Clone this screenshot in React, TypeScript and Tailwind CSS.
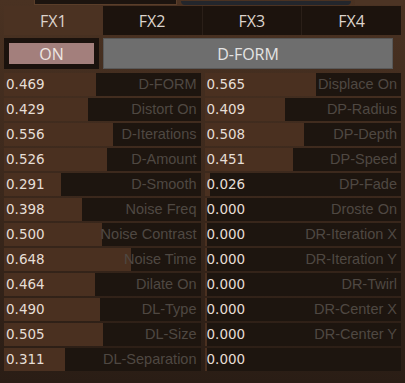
import React from "react";

const left: [number, string][] = [
  [0.469, "D-FORM"],
  [0.429, "Distort On"],
  [0.556, "D-Iterations"],
  [0.526, "D-Amount"],
  [0.291, "D-Smooth"],
  [0.398, "Noise Freq"],
  [0.5, "Noise Contrast"],
  [0.648, "Noise Time"],
  [0.464, "Dilate On"],
  [0.49, "DL-Type"],
  [0.505, "DL-Size"],
  [0.311, "DL-Separation"],
];
const right: [number, string][] = [
  [0.565, "Displace On"],
  [0.409, "DP-Radius"],
  [0.508, "DP-Depth"],
  [0.451, "DP-Speed"],
  [0.026, "DP-Fade"],
  [0, "Droste On"],
  [0, "DR-Iteration X"],
  [0, "DR-Iteration Y"],
  [0, "DR-Twirl"],
  [0, "DR-Center X"],
  [0, "DR-Center Y"],
  [0, ""],
];

function Row({ v, label }: { v: number; label: string }) {
  return (
    <div className="relative h-[23px] bg-[#1d150f] overflow-hidden">
      <div
        className="absolute left-0 top-0 h-full bg-[#4a3020]"
        style={{ width: `max(2px, ${v * 100}%)` }}
      />
      <div className="relative flex h-full items-center justify-between pl-[2px] pr-[4px]">
        <span className="text-[13.5px] text-[#e6ded6] [font-family:'DejaVu_Sans',Verdana,sans-serif] leading-none">
          {v.toFixed(3)}
        </span>
        <span className="text-[14.5px] text-[#4f4842] [font-family:'Liberation_Sans',Arial,sans-serif] leading-none">
          {label}
        </span>
      </div>
    </div>
  );
}

export default function App() {
  return (
    <div className="w-[405px] h-[383px] overflow-hidden bg-gradient-to-b from-[#4a3222] via-[#3b281c] to-[#2a1d15] [font-family:'Open_Sans',sans-serif]">
      <div className="flex h-[5px] items-end">
        <div className="ml-[34px] w-[143px] h-[5px] bg-[#1c140f] border-x border-b border-[#5a3e2a]" />
        <div className="ml-[4px] w-[170px] h-[4px] bg-[#23262c] rounded-b-sm" />
        <div className="ml-[4px] w-[48px] h-[5px] bg-[#4c3424]" />
      </div>
      <div className="px-[4px] pt-[1px]">
        <div className="flex h-[29px]">
          <div className="flex-1 flex items-center justify-center bg-[#4b3222] text-[16px] text-[#ddd4cc]">FX1</div>
          <div className="flex-1 flex items-center justify-center bg-[#1c130d] text-[16px] text-[#ddd4cc] border-r border-[#2a1f18]">FX2</div>
          <div className="flex-1 flex items-center justify-center bg-[#1c130d] text-[16px] text-[#ddd4cc] border-r border-[#2a1f18]">FX3</div>
          <div className="flex-1 flex items-center justify-center bg-[#1c130d] text-[16px] text-[#ddd4cc]">FX4</div>
        </div>
        <div className="flex mt-[3px] h-[31px] gap-[4px]">
          <div className="w-[95px] bg-[#1b120d] p-[5px]">
            <div className="h-full bg-[#a37f7c] flex items-center justify-center text-[16px] text-[#eee6e2]">ON</div>
          </div>
          <div className="w-[290px] bg-[#6e6e6e] border border-[#585858] flex items-center justify-center text-[16px] text-[#e4e4e4]">
            D-FORM
          </div>
        </div>
        <div className="flex gap-[4px] mt-[4px]">
          <div className="flex-1 flex flex-col gap-[2px]">
            {left.map(([v, l], i) => (
              <Row key={i} v={v} label={l} />
            ))}
          </div>
          <div className="flex-1 flex flex-col gap-[2px]">
            {right.map(([v, l], i) => (
              <Row key={i} v={v} label={l} />
            ))}
          </div>
        </div>
      </div>
    </div>
  );
}
